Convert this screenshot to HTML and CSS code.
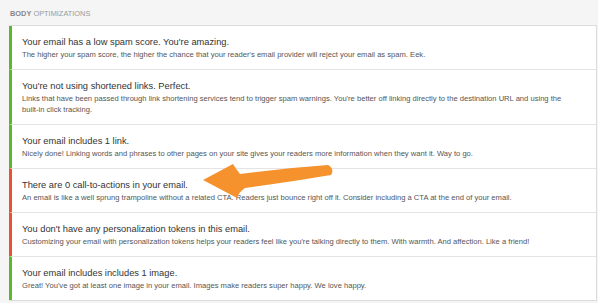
FILE: index.html
```html
<!DOCTYPE html>
<html>
<head>
<meta charset="utf-8">
<link rel="stylesheet" href="styles.css">
</head>
<body>
<div class="page">
  <h2 class="section-title"><b>BODY</b> OPTIMIZATIONS</h2>
  <div class="panel">
    <div class="row ok">
      <div class="title">Your email has a low spam score. You're amazing.</div>
      <div class="desc">The higher your spam score, the higher the chance that your reader's email provider will reject your email as spam. Eek.</div>
    </div>
    <div class="row ok">
      <div class="title">You're not using shortened links. Perfect.</div>
      <div class="desc">Links that have been passed through link shortening services tend to trigger spam warnings. You're better off linking directly to the destination URL and using the built-in click tracking.</div>
    </div>
    <div class="row ok">
      <div class="title">Your email includes 1 link.</div>
      <div class="desc">Nicely done! Linking words and phrases to other pages on your site gives your readers more information when they want it. Way to go.</div>
    </div>
    <div class="row bad">
      <div class="title">There are 0 call-to-actions in your email.</div>
      <div class="desc">An email is like a well sprung trampoline without a related CTA. Readers just bounce right off it. Consider including a CTA at the end of your email.</div>
    </div>
    <div class="row bad">
      <div class="title">You don't have any personalization tokens in this email.</div>
      <div class="desc">Customizing your email with personalization tokens helps your readers feel like you're talking directly to them. With warmth. And affection. Like a friend!</div>
    </div>
    <div class="row ok">
      <div class="title">Your email includes includes 1 image.</div>
      <div class="desc">Great! You've got at least one image in your email. Images make readers super happy. We love happy.</div>
    </div>
  </div>
  <svg class="arrow" width="598" height="303" viewBox="0 0 598 303">
    <path d="M203 180 L233 164 Q236 169 240 174 Q285 168 328 165 Q335 169 331 175 Q290 182 245 188 Q239 192 237 198 Z" fill="#f5922e"/>
  </svg>
</div>
</body>
</html>
```
FILE: styles.css
```css
html, body {
  margin: 0;
  padding: 0;
  background: #f5f5f5;
}
.page {
  position: relative;
  width: 598px;
  height: 303px;
  overflow: hidden;
  font-family: "Liberation Sans", Arial, sans-serif;
}
.section-title {
  margin: 0;
  padding: 9px 0 0 10px;
  height: 16px;
  font-size: 7.4px;
  line-height: 10px;
  font-weight: normal;
  color: #999;
}
.section-title b {
  color: #888;
  font-weight: bold;
}
.panel {
  margin-left: 9px;
  width: 587px;
  background: #fff;
  border: 1px solid #dcdcdc;
  border-left: none;
}
.row {
  border-left: 3px solid #5cb82b;
  border-top: 1px solid #e4e4e4;
  padding: 9px 20px 8.5px 10px;
}
.row:first-child {
  border-top: none;
}
.row.bad {
  border-left-color: #ea5230;
}
.title {
  font-size: 9.3px;
  line-height: 14px;
  color: #333;
}
.desc {
  margin-top: 1px;
  font-size: 7.6px;
  line-height: 10.5px;
  color: #555;
}
.arrow {
  position: absolute;
  left: 0;
  top: 0;
  pointer-events: none;
}
```
